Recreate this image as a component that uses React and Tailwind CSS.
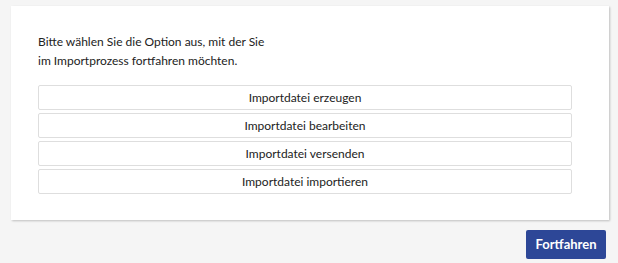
const OPTIONS = [
  'Importdatei erzeugen',
  'Importdatei bearbeiten',
  'Importdatei versenden',
  'Importdatei importieren',
]

export default function App() {
  return (
    <div className="min-h-[263px] bg-[#f5f5f5] pt-[6px] pl-[11px] pr-[9px] text-[12px] text-[#222] [font-family:Lato,sans-serif]">
      <div className="bg-white pt-[26px] pb-[26px] pl-[27px] pr-[37px] shadow-[1px_1px_2px_rgba(0,0,0,0.22)]">
        <p className="text-[12px] leading-[19px]">
          Bitte wählen Sie die Option aus, mit der Sie
          <br />
          im Importprozess fortfahren möchten.
        </p>
        <div className="mt-[15px] flex flex-col gap-[3px]">
          {OPTIONS.map((label) => (
            <button
              key={label}
              className="h-[25px] w-full rounded-[2px] border border-[#dedede] bg-white text-center text-[12px] text-[#222]"
            >
              {label}
            </button>
          ))}
        </div>
      </div>
      <div className="mt-[10px] flex justify-end pr-[3px]">
        <button className="h-[29px] w-[80px] rounded-[2px] bg-[#2d4797] text-[13px] font-bold text-white">
          Fortfahren
        </button>
      </div>
    </div>
  )
}
